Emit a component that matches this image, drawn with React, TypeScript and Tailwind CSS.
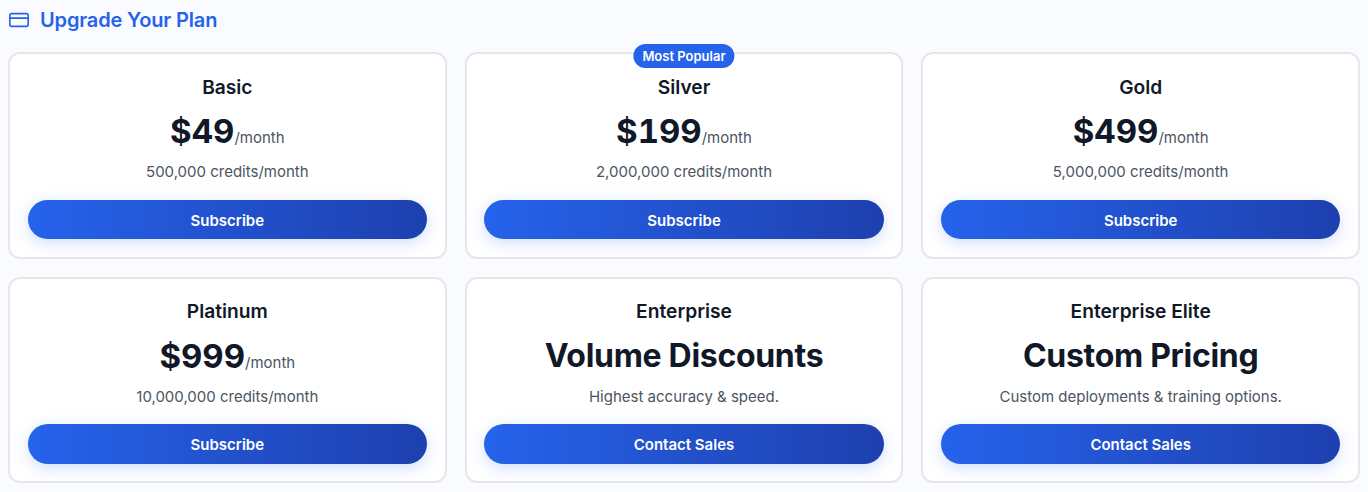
import { CreditCard } from "lucide-react";

const plans = [
  { name: "Basic", price: "$49", unit: "/month", note: "500,000 credits/month", cta: "Subscribe" },
  { name: "Silver", price: "$199", unit: "/month", note: "2,000,000 credits/month", cta: "Subscribe", popular: true },
  { name: "Gold", price: "$499", unit: "/month", note: "5,000,000 credits/month", cta: "Subscribe" },
  { name: "Platinum", price: "$999", unit: "/month", note: "10,000,000 credits/month", cta: "Subscribe" },
  { name: "Enterprise", price: "Volume Discounts", note: "Highest accuracy & speed.", cta: "Contact Sales" },
  { name: "Enterprise Elite", price: "Custom Pricing", note: "Custom deployments & training options.", cta: "Contact Sales" },
];

type Plan = (typeof plans)[number];

function PlanCard({ plan }: { plan: Plan }) {
  return (
    <div className="relative flex h-[206.5px] flex-col items-center rounded-xl border-2 border-[#e5e7eb] bg-white px-[17.6px] pt-[18.5px] text-center">
      {plan.popular && (
        <span className="absolute -top-[10px] left-1/2 -translate-x-1/2 rounded-full bg-[#2563eb] px-[9px] py-[3px] text-[13px] font-semibold leading-[18px] text-white">
          Most Popular
        </span>
      )}
      <h3 className="text-[19.2px] leading-7 font-semibold text-[#111827]">{plan.name}</h3>
      <div className="mt-[8.8px] flex h-[44px] items-baseline justify-center">
        {plan.unit ? (
          <span className="text-[33px] leading-[44px] font-bold tabular-nums text-[#111827]">{plan.price}</span>
        ) : (
          <span className="text-[32px] leading-[44px] font-bold tracking-[-0.3px] text-[#111827]">{plan.price}</span>
        )}
        {plan.unit && <span className="text-[15px] text-[#4b5563]">{plan.unit}</span>}
      </div>
      <p className="mt-[9px] text-[15px] leading-5 text-[#4b5563]">{plan.note}</p>
      <button className="mt-[17.7px] h-[39.5px] w-full rounded-full bg-gradient-to-r from-[#2563eb] to-[#1e40af] pt-[3px] text-[15px] font-semibold text-white shadow-[0_4px_16px_rgba(37,99,235,0.22)]">
        {plan.cta}
      </button>
    </div>
  );
}

export default function App() {
  return (
    <div className="h-[492px] overflow-hidden bg-[#fafbff] px-2 font-['Inter',sans-serif]">
      <div className="flex h-[39px] items-center gap-[10px]">
        <CreditCard className="size-[22px] text-[#2563eb]" strokeWidth={1.75} />
        <h2 className="text-xl font-semibold tracking-[-0.15px] text-[#2563eb]">Upgrade Your Plan</h2>
      </div>
      <div className="mt-[13px] grid grid-cols-3 gap-[18px]">
        {plans.map((plan) => (
          <PlanCard key={plan.name} plan={plan} />
        ))}
      </div>
    </div>
  );
}
